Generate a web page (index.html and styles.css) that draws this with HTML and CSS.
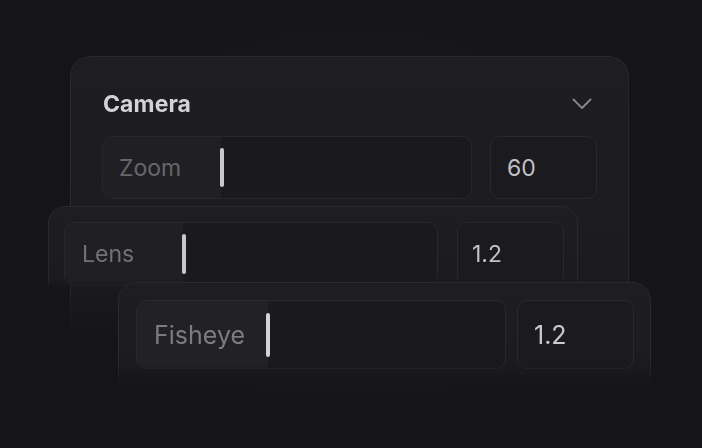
FILE: index.html
```html
<!DOCTYPE html>
<html lang="en">
<head>
<meta charset="utf-8">
<title>Camera</title>
<link rel="stylesheet" href="styles.css">
</head>
<body>
<div class="stage">
  <section class="card card-main">
    <header class="card-head">
      <h2 class="title">Camera</h2>
      <svg class="chevron" width="20" height="12" viewBox="0 0 20 12" aria-hidden="true">
        <path d="M1.5 1.5 L10 10 L18.5 1.5" fill="none" stroke="#8a898e" stroke-width="1.8" stroke-linecap="round" stroke-linejoin="round"/>
      </svg>
    </header>
    <div class="row row-main">
      <div class="slider">
        <div class="fill" style="width:118px"></div>
        <span class="label">Zoom</span>
        <span class="thumb"></span>
      </div>
      <div class="value">60</div>
    </div>
  </section>

  <section class="card card-lens">
    <div class="row row-lens">
      <div class="slider">
        <div class="fill" style="width:118px"></div>
        <span class="label">Lens</span>
        <span class="thumb"></span>
      </div>
      <div class="value">1.2</div>
    </div>
  </section>

  <section class="card card-fish">
    <div class="row row-fish">
      <div class="slider">
        <div class="fill" style="width:131px"></div>
        <span class="label">Fisheye</span>
        <span class="thumb"></span>
      </div>
      <div class="value">1.2</div>
    </div>
  </section>
</div>
</body>
</html>
```

FILE: styles.css
```css
* { box-sizing: border-box; }

html, body {
  margin: 0;
  padding: 0;
  background: #151417;
  font-family: Inter, "Noto Sans", "Liberation Sans", sans-serif;
}

.stage {
  position: relative;
  width: 702px;
  height: 448px;
  overflow: hidden;
  background: radial-gradient(ellipse at 50% 45%, #19181b 0%, #151417 70%);
}

.card {
  position: absolute;
  background: linear-gradient(180deg, #1e1d21 0%, #1b1a1e 100%);
  border: 1px solid #2a292d;
}

.card-main {
  left: 70px;
  top: 56px;
  width: 559px;
  height: 290px;
  border-radius: 20px;
  padding: 27px 31px 0 32px;
  -webkit-mask-image: linear-gradient(180deg, #000 0%, #000 75%, rgba(0,0,0,0) 100%);
  mask-image: linear-gradient(180deg, #000 0%, #000 75%, rgba(0,0,0,0) 100%);
  z-index: 1;
}

.card-head {
  display: flex;
  align-items: center;
  justify-content: space-between;
  height: 40px;
  padding-right: 5px;
}

.title {
  margin: 0;
  font-size: 23px;
  line-height: 40px;
  font-weight: 700;
  color: #d3d2d7;
  letter-spacing: 0.1px;
}

.chevron { display: block; }

.row {
  display: flex;
}

.row-main {
  margin-top: 12px;
  margin-left: -1px;
  gap: 18px;
}

.slider {
  position: relative;
  display: flex;
  align-items: center;
  border: 1px solid #29282c;
  border-radius: 10px;
  background: #1a191d;
  overflow: hidden;
}

.fill {
  position: absolute;
  left: 0;
  top: 0;
  bottom: 0;
  background: #201f23;
}

.label {
  position: relative;
  color: #67666b;
  font-weight: 400;
}

.thumb {
  position: absolute;
  border-radius: 2px;
  background: #c9c8cd;
}

.value {
  display: flex;
  align-items: center;
  border: 1px solid #29282c;
  border-radius: 10px;
  background: #1b1a1e;
  color: #c2c1c6;
}

/* main row sizes */
.row-main .slider { width: 370px; height: 63px; padding-left: 16px; }
.row-main .label { font-size: 23px; }
.row-main .thumb { left: 117px; top: 11px; width: 4px; height: 39px; }
.row-main .value { width: 107px; height: 63px; padding-left: 16px; font-size: 23px; }

/* lens card */
.card-lens {
  left: 48px;
  top: 206px;
  width: 530px;
  height: 81px;
  border-radius: 16px 16px 0 0;
  border-bottom: none;
  padding: 15px 13px 0 15px;
  z-index: 2;
  box-shadow: 0 8px 24px rgba(0,0,0,0.35);
  -webkit-mask-image: linear-gradient(180deg, #000 0%, #000 90%, rgba(0,0,0,0.3) 100%);
  mask-image: linear-gradient(180deg, #000 0%, #000 90%, rgba(0,0,0,0.3) 100%);
}

.row-lens { gap: 19px; }
.row-lens .slider { width: 374px; height: 64px; padding-left: 17px; }
.row-lens .label { font-size: 23px; color: #727176; }
.row-lens .thumb { left: 117px; top: 11px; width: 4px; height: 40px; }
.row-lens .value { width: 107px; height: 64px; padding-left: 14px; font-size: 23px; }

/* fisheye card */
.card-fish {
  left: 118px;
  top: 282px;
  width: 533px;
  height: 112px;
  border-radius: 18px;
  padding: 17px 16px 0 17px;
  z-index: 3;
  box-shadow: 0 10px 30px rgba(0,0,0,0.45);
  -webkit-mask-image: linear-gradient(180deg, #000 0%, #000 72%, rgba(0,0,0,0) 100%);
  mask-image: linear-gradient(180deg, #000 0%, #000 72%, rgba(0,0,0,0) 100%);
}

.row-fish { gap: 11px; }
.row-fish .slider { width: 370px; height: 69px; padding-left: 17px; }
.row-fish .fill { background: #222125; }
.row-fish .label { font-size: 25px; color: #7c7b80; }
.row-fish .thumb { left: 129px; top: 12px; width: 4px; height: 44px; background: #d4d3d8; }
.row-fish .value { width: 117px; height: 69px; padding-left: 16px; font-size: 25px; color: #cac9ce; }
```
